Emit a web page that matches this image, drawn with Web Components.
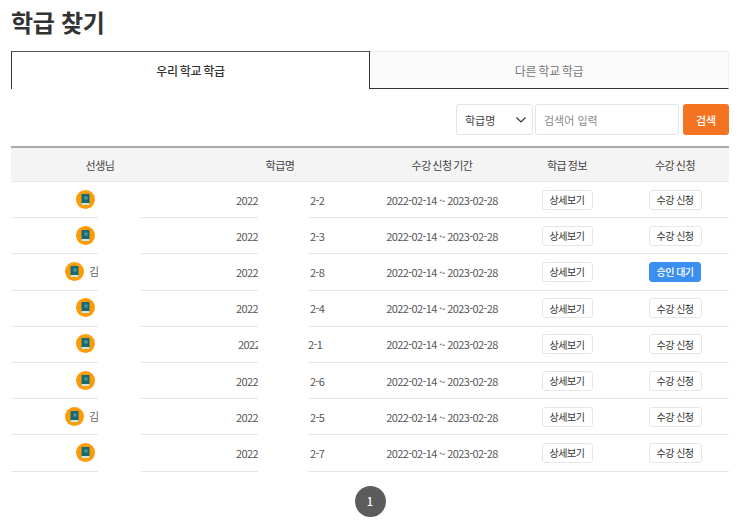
<!DOCTYPE html>
<html lang="ko"><head><meta charset="utf-8"><style>
html,body{margin:0;padding:0;background:#fff}
body{font-family:"Noto Sans CJK KR","Noto Sans",sans-serif;color:#333;overflow:hidden;height:522px}
</style></head><body>
<find-class-page></find-class-page>
<script>
const FONT='"Noto Sans CJK KR","Noto Sans",sans-serif';
class ClassTabs extends HTMLElement{constructor(){super();this.attachShadow({mode:'open'}).innerHTML=`<style>
:host{display:grid;grid-template-columns:359px 359px;height:38px;font-size:12px;letter-spacing:-.3px;word-spacing:-1px}
div{display:flex;align-items:center;justify-content:center;box-sizing:border-box}
.on{border:1px solid #333;border-bottom:0;color:#333;font-weight:500;border-top-color:#555}
.off{background:#fafafa;border:1px solid #eee;border-left:0;border-bottom:1px solid #333;color:#777}
</style><div class="on">우리 학교 학급</div><div class="off">다른 학교 학급</div>`}}
class ClassSearch extends HTMLElement{constructor(){super();this.attachShadow({mode:'open'}).innerHTML=`<style>
:host{display:flex;justify-content:flex-end;gap:2px;height:31px;font-size:11px}
.sel,.inp{box-sizing:border-box;border:1px solid #e4e4e4;border-radius:3px;display:flex;align-items:center;background:#fff}
.sel{width:77px;padding:0 5px 0 8px;justify-content:space-between;color:#444}
.inp{width:144px;padding:0 8px;color:#888;letter-spacing:0}
.btn{margin-left:2px;width:46px;border-radius:3px;background:#f47321;color:#fff;display:flex;align-items:center;justify-content:center;font-weight:500}
svg{display:block}
</style><div class="sel"><span>학급명</span><svg width="12" height="8" viewBox="0 0 12 8"><path d="M1.500 1.500 6 6l4.500-4.500" fill="none" stroke="#333" stroke-width="1.200"/></svg></div><div class="inp">검색어 입력</div><div class="btn">검색</div>`}}
class BookAvatar extends HTMLElement{constructor(){super();this.attachShadow({mode:'open'}).innerHTML=`<style>
:host{display:block;width:19px;height:19px;flex:none}svg{display:block}
</style><svg width="19" height="19" viewBox="0 0 19 19"><circle cx="9.500" cy="9.500" r="9.500" fill="#fb9b05"/><rect x="5.500" y="4" width="8" height="11" rx=".5" fill="#166a78"/><rect x="5.500" y="13" width="8" height="2" fill="#d5e8d8"/><rect x="8.500" y="6.500" width="3" height="3" fill="#4f98a0"/></svg>`}}
class SmallButton extends HTMLElement{constructor(){super();this.attachShadow({mode:'open'}).innerHTML=`<style>
:host{display:inline-flex;box-sizing:border-box;height:20px;align-items:center;justify-content:center;border:1px solid #e6e6e6;border-radius:3px;background:#fff;color:#333;font-size:10px;font-weight:400;width:51px}
:host([wide]){width:53px}
:host([blue]){background:#3b8ff0;border-color:#3b8ff0;color:#fff;width:52px;font-weight:500}
</style><slot></slot>`}}
class ClassRow extends HTMLElement{constructor(){super();
const t=this.getAttribute('t')||'',c=this.getAttribute('c')||'',w=this.hasAttribute('wait'),sh=this.hasAttribute('shift');
this.attachShadow({mode:'open'}).innerHTML=`<style>
:host{display:grid;grid-template-columns:87px 43px 117px 50px 1fr;height:36.200px;box-sizing:border-box;font-size:11px;color:#555;letter-spacing:-.6px}
.s{border-bottom:1px solid #e6e6e6;box-sizing:border-box;display:flex;align-items:center}
.t{justify-content:flex-end;padding:0 ${t?0:3}px 1px 0}
.who{display:flex;align-items:center;gap:5px;margin-right:${t?-1:0}px}
.name{color:#666;letter-spacing:0}
.year{justify-content:flex-end;overflow:hidden;white-space:nowrap}
.year span{margin-right:${sh?-2:0}px}
.rest{display:grid;grid-template-columns:63px 142px 108px 108px;align-items:center}
.code{padding-left:${sh?0:2}px}
.date{text-align:center;white-space:nowrap;letter-spacing:-.6px}
.mid{display:flex;justify-content:center;letter-spacing:-.5px}
</style>
<div class="s t"><span class="who"><book-avatar></book-avatar>${t?`<span class="name">${t}</span>`:''}</span></div>
<div></div>
<div class="s year"><span>2022</span></div>
<div></div>
<div class="s rest"><span class="code">${c}</span><span class="date">2022-02-14 ~ 2023-02-28</span>
<span class="mid"><small-button>상세보기</small-button></span>
<span class="mid">${w?'<small-button blue>승인 대기</small-button>':'<small-button wide>수강 신청</small-button>'}</span></div>`;
}}
class ClassHead extends HTMLElement{constructor(){super();this.attachShadow({mode:'open'}).innerHTML=`<style>
:host{display:grid;grid-template-columns:178px 182px 142px 108px 108px;height:36px;box-sizing:border-box;border-top:2px solid #aaa;border-bottom:1px solid #e6e6e6;background:#f4f4f4;font-size:11px;color:#444;letter-spacing:-.5px;word-spacing:-1px}
span{display:flex;align-items:center;justify-content:center;white-space:pre}
</style><span>선생님</span><span>학급명</span><span>수강 신청 기간</span><span>학급 정보</span><span>수강 신청</span>`}}
class PageNum extends HTMLElement{constructor(){super();this.attachShadow({mode:'open'}).innerHTML=`<style>
:host{display:flex;justify-content:center}
b{width:31px;height:31px;border-radius:50%;background:#5c5c5c;color:#fff;font:500 11px ${FONT};display:flex;align-items:center;justify-content:center}
</style><b>1</b>`}}
class FindClassPage extends HTMLElement{constructor(){super();
const rows=[['','2-2'],['','2-3'],['김','2-8',1],['','2-4'],['','2-1',0,1],['','2-6'],['김','2-5'],['','2-7']];
this.attachShadow({mode:'open'}).innerHTML=`<style>
:host{display:block;padding:0 14px 0 11px;width:718px}
h1{margin:0;height:51px;font-size:24px;line-height:43px;font-weight:700;color:#333;letter-spacing:-.3px}
class-search{margin-top:15px}
class-head{margin-top:11px}
page-num{margin-top:14px}
</style><h1>학급 찾기</h1><class-tabs></class-tabs><class-search></class-search><class-head></class-head>
${rows.map(r=>`<class-row t="${r[0]}" c="${r[1]}" ${r[2]?'wait':''} ${r[3]?'shift':''}></class-row>`).join('')}
<page-num></page-num>`}}
for(const [n,c] of [['class-tabs',ClassTabs],['class-search',ClassSearch],['book-avatar',BookAvatar],['small-button',SmallButton],['class-row',ClassRow],['class-head',ClassHead],['page-num',PageNum],['find-class-page',FindClassPage]])customElements.define(n,c);
</script></body></html>
